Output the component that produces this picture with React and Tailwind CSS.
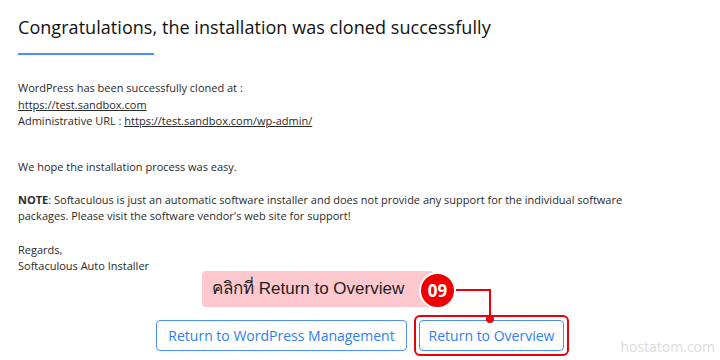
import React from 'react'

const font = { fontFamily: '"Open Sans", "Noto Sans", sans-serif' }

export default function App() {
	return (
		<div className="relative w-[720px] h-[360px] bg-white overflow-hidden text-[#222] flex flex-col" style={font}>
			<div className="pl-[18px] pt-[14px]">
				<h1 className="text-[18px] leading-[26px] text-[#111] tracking-[0.05px]">Congratulations, the installation was cloned successfully</h1>
				<div className="mt-[13px] w-[136px] h-[2px] bg-[#4a8ff5]" />
				<div className="mt-[25px] text-[11px] leading-[16.5px] text-[#2a2a2a] font-medium">
					<p>WordPress has been successfully cloned at :</p>
					<p><a className="underline">https://test.sandbox.com</a></p>
					<p>Administrative URL : <a className="underline">https://test.sandbox.com/wp-admin/</a></p>
					<p className="mt-[29px]">We hope the installation process was easy.</p>
					<p className="mt-[16.5px]"><b className="font-bold">NOTE</b>: Softaculous is just an automatic software installer and does not provide any support for the individual software<br />packages. Please visit the software vendor's web site for support!</p>
					<p className="mt-[17px]">Regards,</p>
					<p>Softaculous Auto Installer</p>
				</div>
			</div>

			<div className="mt-[45px] flex justify-center gap-[12px]">
				<button className="h-[31px] w-[251px] rounded-[4px] border border-[#4a8ff5] text-[#2f7ef2] text-[14px]">Return to WordPress Management</button>
				<div className="relative">
					<div className="absolute -inset-[5px] rounded-[6px] border-2 border-[#e8000b]" />
					<button className="h-[31px] w-[145px] rounded-[4px] border border-[#4a8ff5] text-[#2f7ef2] text-[14px]">Return to Overview</button>
				</div>
			</div>

			{/* annotation */}
			<div className="absolute left-[202px] top-[271px] w-[232px] h-[36px] rounded-[4px] bg-[#fdc9ce] flex items-center pl-[10px] text-[17px] text-[#222]" style={{ fontFamily: '"Liberation Sans", "DejaVu Sans", sans-serif' }}>
				คลิกที่ Return to Overview
			</div>
			<div className="absolute left-[419px] top-[272px] w-[37px] h-[37px] rounded-full bg-[#ee0000] border-2 border-white flex items-center justify-center text-white font-bold text-[17px]">09</div>
			<div className="absolute left-[456px] top-[289px] w-[35px] h-[2px] bg-[#e8000b]" />
			<div className="absolute left-[489px] top-[289px] w-[2px] h-[30px] bg-[#e8000b]" />
			<div className="absolute left-[486px] top-[315px] w-[8px] h-[8px] rounded-full bg-[#e8000b]" />

			<div className="absolute right-[5px] top-[336px] text-[14px] text-[#dcdcdc]">hostatom.com</div>
		</div>
	)
}
